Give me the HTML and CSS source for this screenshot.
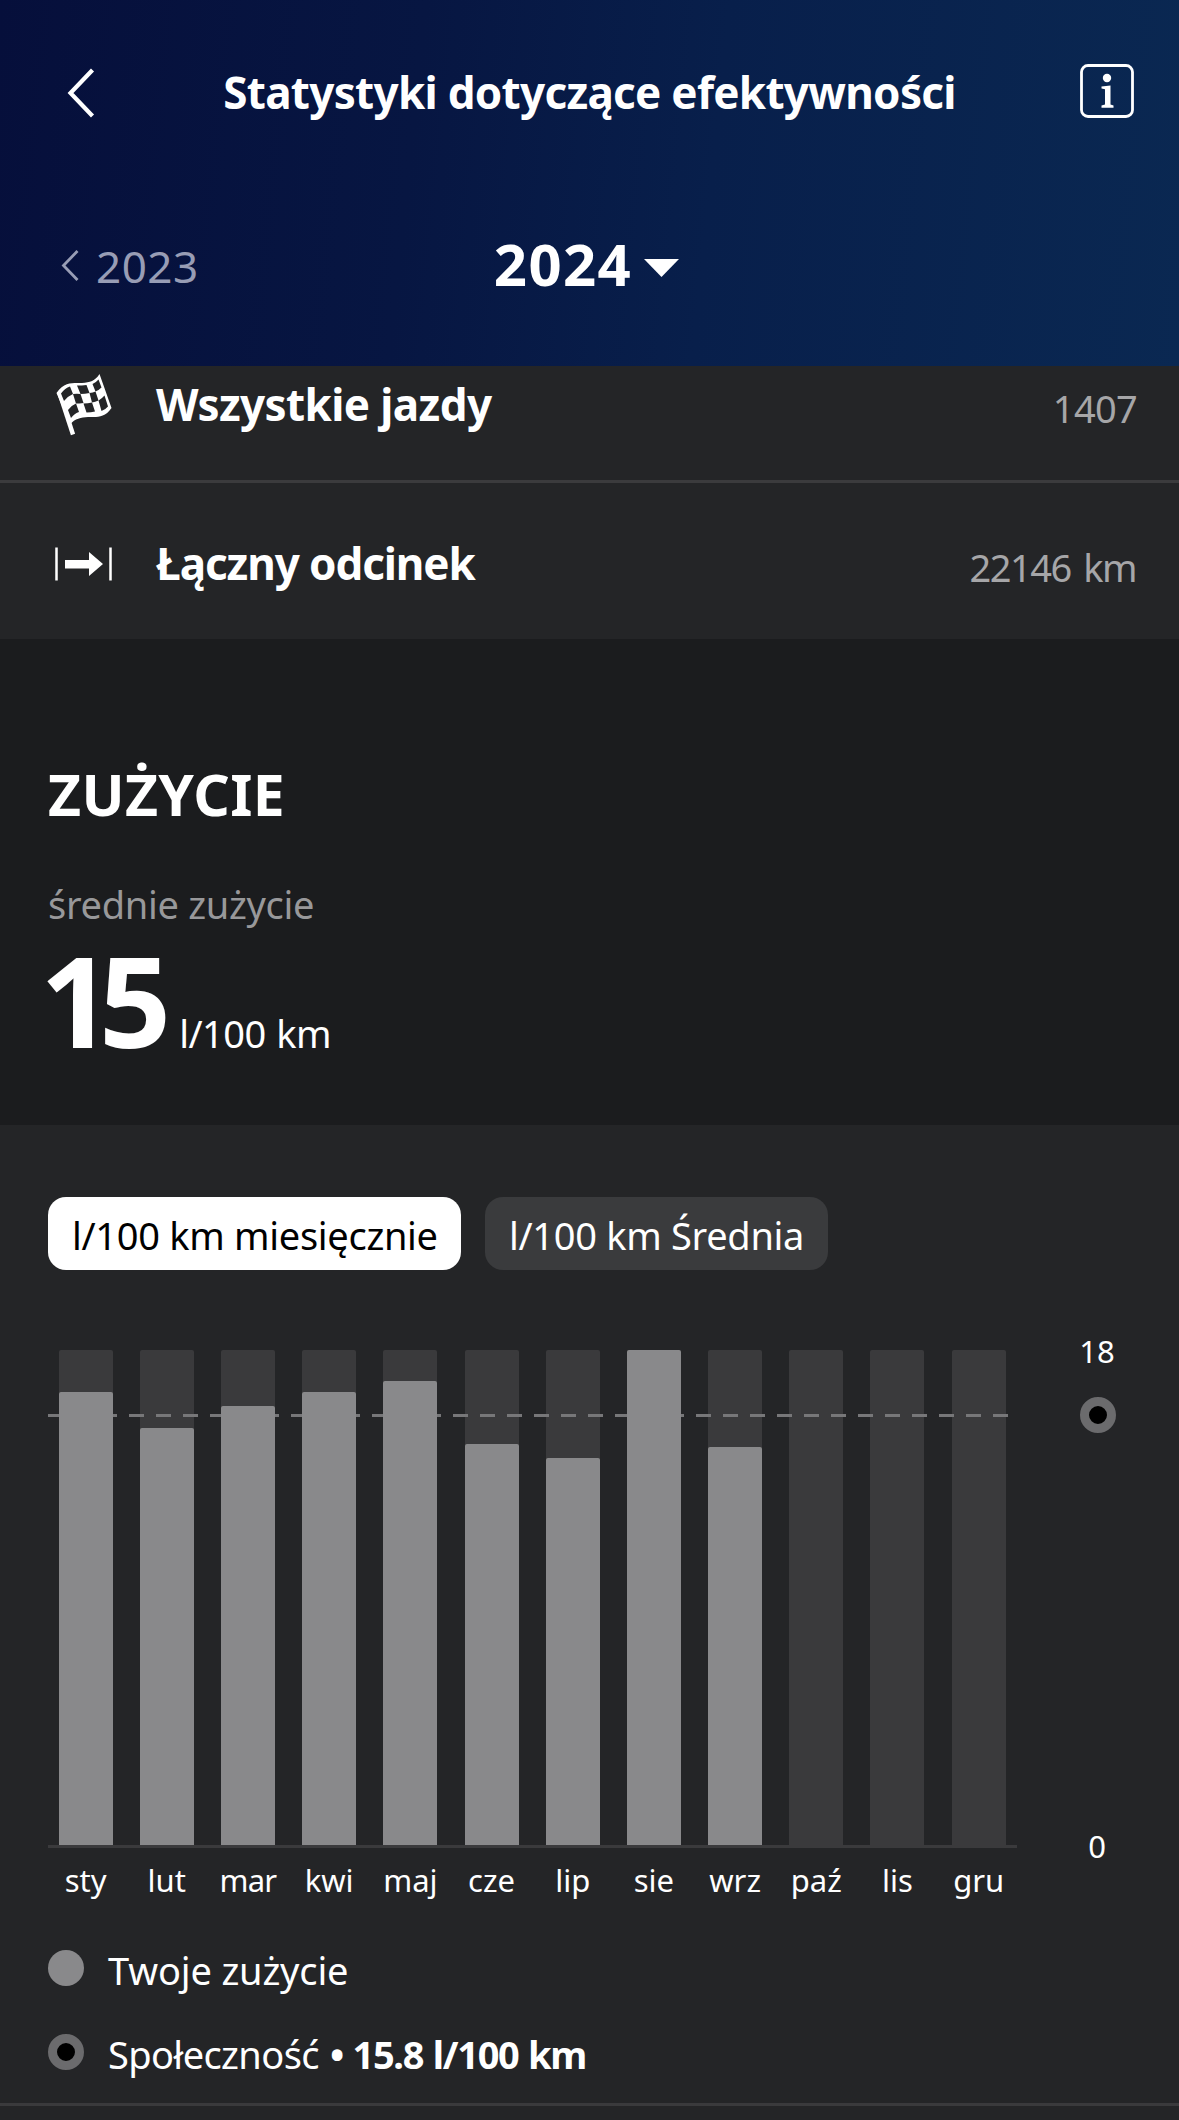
FILE: index.html
```html
<!DOCTYPE html>
<html lang="pl">
<head>
<meta charset="utf-8">
<title>Statystyki dotyczące efektywności</title>
<link rel="stylesheet" href="styles.css">
</head>
<body>
<header class="header">
  <div class="title-bar">
    <svg class="icon-box" viewBox="0 0 54 54"><path d="M47.500 5L25.500 28L47.500 51" fill="none" stroke="#fff" stroke-width="4.200"/></svg>
    <h1 class="title">Statystyki dotyczące efektywności</h1>
    <svg class="icon-box info-icon" viewBox="0 0 54 54">
      <rect x="1.500" y="1.500" width="51" height="51" rx="6.500" fill="none" stroke="#fff" stroke-width="2.800"/>
      <circle cx="27" cy="14" r="4.200" fill="#fff"/>
      <path d="M21.500 22.500L30.500 21.500V40.500L33.500 41.500V43.700H21.500V41.500L25 40.500V25.200L21.500 24.500Z" fill="#fff"/>
    </svg>
  </div>
  <div class="year-bar">
    <div class="year-prev">
      <svg class="prev-icon" viewBox="0 0 18 32"><path d="M16.500 1L2.500 15.500L16.500 30" fill="none" stroke="currentColor" stroke-width="2.800"/></svg>
      <span>2023</span>
    </div>
    <div class="year-current">
      <span class="year-value">2024</span>
      <svg class="caret" viewBox="0 0 35 18"><path d="M0 0H35L17.500 18Z" fill="#fff"/></svg>
    </div>
  </div>
</header>

<section class="totals">
  <div class="total-row">
    <svg class="total-icon" viewBox="0 0 62 62">
      <path d="M8 17.500L22 60.500" stroke="#fff" stroke-width="4.400" fill="none"/>
      <path d="M5.500 19C14 7 23 9.500 31 9C39 8.500 44 7 48.500 0L60.500 34C53 45 45 42.500 37 43C30 43.500 24 44.500 19 50.500Z" fill="#fff"/>
      <g fill="#242527">
        <path d="M10 19.500Q14 14 19 12.500L22 20Q17 22 13 27Z"/>
        <path d="M26 11.500Q31 11.500 35.500 11L38.500 19Q34 20 29.500 20Z"/>
        <path d="M41.500 10Q45 8.500 47.500 5.500L50.500 13.500Q47.500 16.500 44.500 17.500Z"/>
        <path d="M22 20Q26 19.500 29.500 20L32.500 29Q28 29.500 25 29.500Z"/>
        <path d="M38.500 19Q42 18.500 44.500 17.500L47.500 26.500Q44 28 41 28.500Z"/>
        <path d="M17 36Q21 31 25 29.500L28 38Q24 39 20 44Z"/>
        <path d="M32.500 29.500Q37 29.500 41 28.500L44 37.500Q40 38.500 35.500 38.500Z"/>
        <path d="M47.500 26.500Q51 24.500 53.500 21.500L57 32.500Q54 36 50.500 37Z"/>
      </g>
    </svg>
    <span class="total-name">Wszystkie jazdy</span>
    <span class="total-value">1407</span>
  </div>
  <div class="total-row">
    <svg class="total-icon" viewBox="0 0 62 62">
      <path d="M5.500 14.500V47.500M59.500 14.500V47.500" stroke="#fff" stroke-width="2.500"/>
      <path d="M14 27H38V19L52 31L38 43V35.500H14Z" fill="#fff"/>
    </svg>
    <span class="total-name total-name--distance">Łączny odcinek</span>
    <span class="total-value total-value--distance">22146 km</span>
  </div>
</section>

<section class="summary">
  <h2 class="summary-title">ZUŻYCIE</h2>
  <p class="summary-label">średnie zużycie</p>
  <p class="summary-figure"><span class="figure">15</span><span class="unit">l/100 km</span></p>
</section>

<section class="details">
  <div class="chips">
    <span class="chip chip--active">l/100 km miesięcznie</span>
    <span class="chip">l/100 km Średnia</span>
  </div>

  <div class="chart">
    <div class="plot">
      <div class="bars">
        <div class="track"><div class="fill" style="height:453px"></div></div>
        <div class="track"><div class="fill" style="height:417px"></div></div>
        <div class="track"><div class="fill" style="height:439px"></div></div>
        <div class="track"><div class="fill" style="height:453px"></div></div>
        <div class="track"><div class="fill" style="height:464px"></div></div>
        <div class="track"><div class="fill" style="height:401px"></div></div>
        <div class="track"><div class="fill" style="height:387px"></div></div>
        <div class="track"><div class="fill" style="height:495px"></div></div>
        <div class="track"><div class="fill" style="height:398px"></div></div>
        <div class="track"></div>
        <div class="track"></div>
        <div class="track"></div>
        <div class="average-line"></div>
      </div>
      <div class="months">
        <span>sty</span><span>lut</span><span class="tight">mar</span><span>kwi</span><span>maj</span><span>cze</span><span>lip</span><span>sie</span><span>wrz</span><span>paź</span><span>lis</span><span>gru</span>
      </div>
    </div>
    <div class="axis">
      <span>18</span>
      <span>0</span>
      <div class="dot dot--community axis-marker"></div>
    </div>
  </div>

  <div class="legend">
    <div class="legend-row"><span class="dot"></span><span>Twoje zużycie</span></div>
    <div class="legend-row"><span class="dot dot--community"></span><span class="community">Społeczność</span><b class="community-value">• 15.8 l/100 km</b></div>
  </div>
</section>
</body>
</html>
```
FILE: styles.css
```css
* {
  box-sizing: border-box;
  margin: 0;
}

body {
  width: 1179px;
  height: 2120px;
  overflow: hidden;
  background: #242527;
  color: #fff;
  font: 38px/40px "Noto Sans", sans-serif;
}

svg {
  display: block;
  flex: none;
}

.header {
  height: 366px;
  background: linear-gradient(96deg, #060f3b 0%, #071642 35%, #081f4b 60%, #0a2852 100%);
}

.title-bar {
  display: flex;
  align-items: center;
  height: 183px;
  padding: 0 45px;
}

.icon-box {
  width: 54px;
  height: 54px;
}

.info-icon {
  margin-top: -1px;
}

.title {
  flex: 1;
  text-align: center;
  font-size: 44px;
  line-height: 60px;
  letter-spacing: -0.7px;
}

.year-bar {
  display: grid;
  grid-template-columns: 1fr auto 1fr;
  align-items: center;
  height: 166px;
  padding: 0 45px;
}

.year-prev {
  display: flex;
  align-items: center;
  gap: 17px;
  padding-left: 16px;
  color: #989db5;
  font-size: 44px;
  letter-spacing: 0.5px;
}

.prev-icon {
  width: 18px;
  height: 32px;
}

.year-current {
  display: flex;
  align-items: center;
  gap: 12px;
  padding-right: 6px;
}

.year-value {
  padding-bottom: 5px;
  font-size: 58px;
  line-height: 70px;
  font-weight: 700;
  letter-spacing: 1.4px;
}

.caret {
  width: 35px;
  height: 18px;
  margin-top: 4px;
}

.totals {
  height: 273px;
  overflow: hidden;
}

.total-row {
  display: flex;
  align-items: center;
  height: 156px;
  padding: 0 44px 0 51px;
}

/* The list is scrolled, so the first row starts beneath the header. */
.total-row:first-child {
  height: 159px;
  margin-top: -42px;
  border-bottom: 3px solid #3b3b3d;
}

.total-icon {
  width: 62px;
  height: 62px;
  margin-top: 6px;
}

.total-name {
  margin: 4px 0 0 43px;
  font-size: 44px;
  line-height: 60px;
  font-weight: 700;
  letter-spacing: -0.6px;
}

.total-name--distance {
  letter-spacing: -1.1px;
}

.total-value {
  margin: 12px -2px 0 auto;
  color: #a6a6a8;
  letter-spacing: -0.7px;
}

.total-value--distance {
  margin-right: -1px;
  letter-spacing: -1.5px;
  word-spacing: 4px;
}

.summary {
  height: 486px;
  padding: 125px 48px 0;
  background: #1b1c1e;
}

.summary-title {
  font-size: 57px;
  line-height: 60px;
  letter-spacing: 0.4px;
}

.summary-label {
  margin-top: 60px;
  color: #98989a;
  letter-spacing: -0.3px;
}

.summary-figure {
  display: flex;
  align-items: baseline;
  gap: 21px;
  margin: 15px 0 0 -8px;
}

.figure {
  font-size: 126px;
  line-height: 120px;
  font-weight: 700;
  letter-spacing: -13px;
}

.unit {
  letter-spacing: -0.5px;
  word-spacing: 1px;
}

.details {
  padding: 72px 48px 0;
}

.chips {
  display: flex;
  gap: 24px;
}

.chip {
  width: 343px;
  height: 73px;
  padding: 18px 0 0 24px;
  border-radius: 18px;
  background: #3a3b3d;
  white-space: nowrap;
  letter-spacing: -0.3px;
}

.chip--active {
  width: 413px;
  background: #fff;
  color: #000;
}

.chart {
  display: flex;
  gap: 46px;
  margin-top: 80px;
}

.plot {
  width: 969px;
}

.bars {
  position: relative;
  display: grid;
  grid-template-columns: repeat(12, 54px);
  column-gap: 27.2px;
  height: 498px;
  padding-left: 10.6px;
  border-bottom: 3px solid #3a3a3c;
}

.track {
  display: flex;
  align-items: flex-end;
  border-radius: 2px 2px 0 0;
  background: #3a3a3c;
}

.fill {
  position: relative;
  z-index: 2;
  width: 100%;
  border-radius: 2px 2px 0 0;
  background: #89898b;
}

.average-line {
  position: absolute;
  z-index: 1;
  top: 64px;
  left: 0;
  width: 961px;
  height: 3px;
  background: repeating-linear-gradient(90deg, #777779 0 15px, transparent 15px 27px);
}

.months {
  display: flex;
  margin: 12px 0 0 -3px;
  font-size: 31px;
}

.months span {
  flex: 0 0 81.2px;
  text-align: center;
}

.months .tight {
  letter-spacing: -0.8px;
}

.axis {
  position: relative;
  display: flex;
  flex-direction: column;
  justify-content: space-between;
  align-items: center;
  width: 70px;
  height: 535px;
  margin-top: -19px;
  font-size: 31px;
}

.axis-marker {
  position: absolute;
  top: 66px;
  left: 17px;
}

.legend {
  display: flex;
  flex-direction: column;
  gap: 48px;
  margin: 50px -48px 0;
  padding: 0 48px 33px;
  border-bottom: 3px solid #3a3a3c;
}

.legend-row {
  display: flex;
  align-items: center;
  height: 36px;
  line-height: 44px;
  letter-spacing: -0.16px;
}

.legend-row > :not(.dot) {
  padding-top: 3px;
}

.dot {
  flex: none;
  width: 36px;
  height: 36px;
  margin-right: 24px;
  border-radius: 50%;
  background: #89898b;
}

.dot--community {
  border: 9px solid #6b6b6d;
  background: #000;
}

.community {
  letter-spacing: -0.6px;
}

.community-value {
  margin-left: 11px;
  letter-spacing: -1.3px;
  word-spacing: 1px;
}
```
